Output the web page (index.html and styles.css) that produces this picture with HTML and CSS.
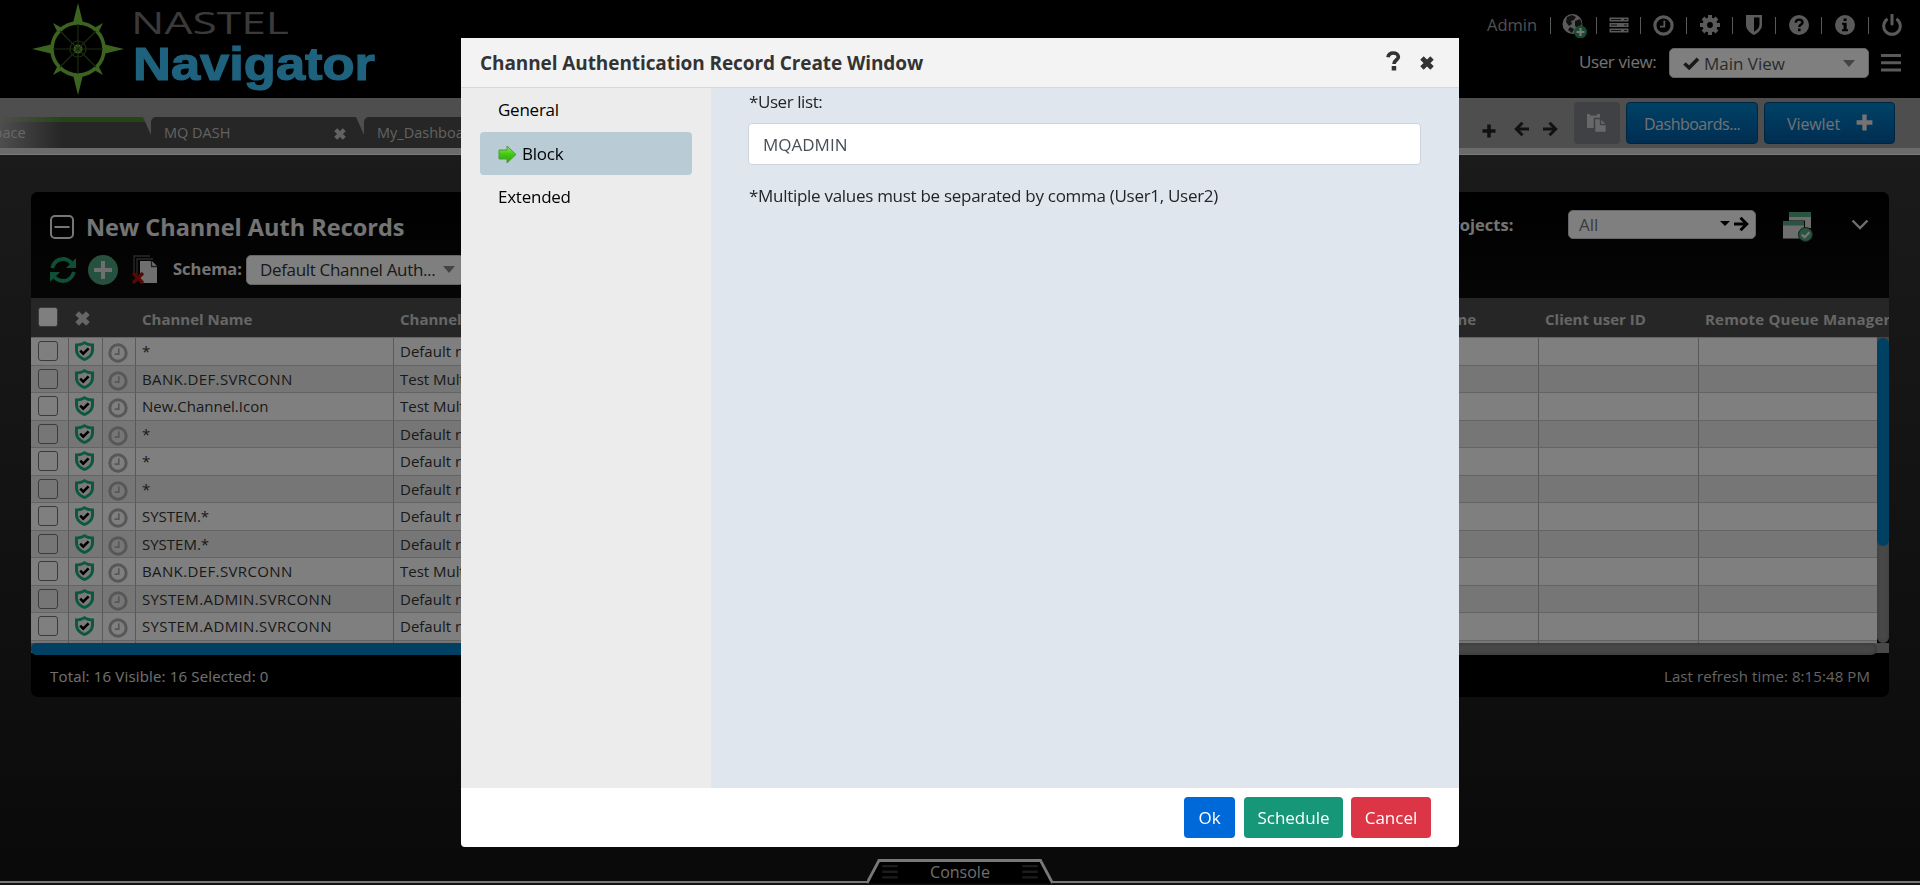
FILE: index.html
```html
<!DOCTYPE html>
<html lang="en">
<head>
<meta charset="utf-8">
<title>Nastel Navigator</title>
<link rel="stylesheet" href="styles.css">
</head>
<body>
<svg class="defs" width="0" height="0" aria-hidden="true">
  <symbol id="shield" viewBox="0 0 19 20"><path d="M9.500 0C7 2 3.500 2.600 0 2.600V9c0 5 4 9 9.500 11C15 18 19 14 19 9V2.600C15.500 2.600 12 2 9.500 0z" fill="#18b07a"/><path d="M9.500 3.200C7.500 4.400 5.300 5 3 5.200V9c0 3.600 2.600 6.400 6.500 8 3.900-1.600 6.500-4.400 6.500-8V5.200C13.700 5 11.500 4.400 9.500 3.200z" fill="#f4f4f4"/><path d="M5.200 9.700l3 3 5.400-5.400" fill="none" stroke="#000" stroke-width="2.600"/></symbol>
  <symbol id="clock" viewBox="0 0 20 20"><circle cx="10" cy="10" r="8.200" fill="none" stroke="currentColor" stroke-width="3"/><path d="M10.800 5.200v5.900H6.600" fill="none" stroke="currentColor" stroke-width="1.700"/></symbol>
  <symbol id="times" viewBox="0.600 0.600 12.800 12.800"><path d="M2.400 2.400l9.200 9.200M11.600 2.400l-9.200 9.200" stroke="currentColor" stroke-width="4.400"/></symbol>
  <symbol id="plus" viewBox="0 0 14 14"><path d="M7 0.500v13M0.500 7h13" stroke="currentColor" stroke-width="3.600"/></symbol>
  <symbol id="arrow" viewBox="0 0 16 16"><path d="M1 8h12M7.500 1.800L13.700 8l-6.200 6.200" fill="none" stroke="currentColor" stroke-width="3"/></symbol>
  <symbol id="bars" viewBox="0 0 20 18"><path d="M0 1.500h20M0 8.700h20M0 16h20" stroke="currentColor" stroke-width="3"/></symbol>
</svg>

<header class="top">
  <svg class="logo" viewBox="0 0 390 98" width="390" height="98">
    <g fill="#78c840" stroke="none">
      <path d="M78 3l5 20h-10zM78 95l5-20h-10zM32 49l21-5v10zM124 49l-21-5v10z"/>
      <path d="M53 23l9 5-4 5zM103 23l-9 5 4 5zM53 75l9-5-4-5zM103 75l-9-5 4-5z"/>
      <circle cx="78" cy="49" r="4.500"/>
    </g>
    <circle cx="78" cy="49" r="26" fill="none" stroke="#78c840" stroke-width="3.600"/>
    <g fill="none" stroke="#35591f" stroke-width="1.200"><circle cx="78" cy="49" r="8"/><path d="M78 24v50M53 49h50M60 31l36 36M96 31L60 67"/></g>
    <text x="131" y="33.500" class="brand-a" textLength="158" lengthAdjust="spacingAndGlyphs">NASTEL</text>
    <text x="133" y="80" class="brand-b" textLength="242" lengthAdjust="spacingAndGlyphs">Navigator</text>
  </svg>
  <div class="tools">
    <div class="toolrow">
      <span class="admin">Admin</span>
      <i><svg width="26" height="26" viewBox="0 0 26 26"><circle cx="11.500" cy="12" r="10" fill="#b6b6b6"/><path d="M6 5l5-2 4 2-2 3-3 1 1 3-3 2-3-4zM14 9l5-2 2 5-4 4-3-2zM9 15l4 2-2 4-4-3z" fill="#222"/><circle cx="19.500" cy="20" r="6.500" fill="#2f9560"/><path d="M19.500 16v8M15.500 20h8" stroke="#eee" stroke-width="2.200"/></svg></i>
      <i><svg width="20" height="16" viewBox="0 0 20 16"><path d="M.5 2.500h19M.5 8h19M.5 13.500h19" stroke="#b4b4b4" stroke-width="4"/><path d="M2 2.500h10M2 8h6M2 13.500h10M15 2.500h3M15 8h3M15 13.500h3" stroke="#222" stroke-width="1"/></svg></i>
      <i><svg width="21" height="21"><use href="#clock"/></svg></i>
      <i><svg width="20" height="20" viewBox="-10 -10 20 20"><circle r="5.200" fill="none" stroke="currentColor" stroke-width="4.600"/><path d="M0-10v4M0 6v4M-10 0h4M6 0h4M-7-7l3 3M7 7L4 4M7-7L4-4M-7 7l3-3" stroke="currentColor" stroke-width="4"/></svg></i>
      <i><svg width="18" height="20" viewBox="0 0 18 20"><path d="M1 0h16v10c0 4.500-4 8-8 10-4-2-8-5.500-8-10zM9 2.500v14.300c3.500-2 5.500-4.300 5.500-7.300v-7z" fill="currentColor" fill-rule="evenodd"/></svg></i>
      <i><svg width="20" height="20" viewBox="0 0 20 20"><circle cx="10" cy="10" r="10" fill="currentColor"/><path d="M6.600 7.600c.4-2.200 1.800-3 3.400-3 2 0 3.500 1.100 3.500 2.800 0 2.300-3.200 2-3.200 4.600" fill="none" stroke="#000" stroke-width="2.400"/><path d="M9 13.600h2.600v2.600H9z"/></svg></i>
      <i><svg width="20" height="20" viewBox="0 0 20 20"><circle cx="10" cy="10" r="10" fill="currentColor"/><path d="M8.600 3.500h3v2.600h-3zM7 7.800h4.600v6.400H13v2H7v-2h1.500V9.800H7z"/></svg></i>
      <i><svg width="20" height="22" viewBox="0 0 20 22"><path d="M5.600 5a8.300 8.300 0 1 0 8.800 0" fill="none" stroke="currentColor" stroke-width="3"/><path d="M10 1v9" stroke="currentColor" stroke-width="3" stroke-linecap="round"/></svg></i>
    </div>
    <div class="viewrow">
      <span class="uv">User view:</span>
      <div class="select mainview"><svg width="17" height="13" viewBox="0 0 17 13"><path d="M1.500 6.500l4.700 4.300L15 1.800" fill="none" stroke="#333" stroke-width="3.600"/></svg><span>Main View</span><b class="caret"></b></div>
      <svg class="burger" width="20" height="18"><use href="#bars"/></svg>
    </div>
  </div>
</header>

<nav class="tabbar">
  <div class="tabs">
    <div class="tab active"><span>Workspace</span></div>
    <div class="tab"><span>MQ DASH</span><svg width="12" height="12"><use href="#times"/></svg></div>
    <div class="tab"><span>My_Dashboard</span></div>
  </div>
  <div class="actions">
    <svg class="a1" width="14" height="14"><use href="#plus"/></svg>
    <svg class="a2" width="16" height="16"><use href="#arrow"/></svg>
    <svg class="a3" width="16" height="16"><use href="#arrow"/></svg>
    <div class="paste"><svg width="20" height="20" viewBox="0 0 20 20"><path d="M0 1h13v14H0z" fill="#d0d0d2"/><path d="M3 1.800h7" stroke="#80828a" stroke-width="1.500"/><path d="M7.500 5.500h6.500l5.500 5.500v8.500h-12z" fill="#d0d0d2" stroke="#80828a" stroke-width="1.600"/><path d="M13.500 6v5.500H19" fill="none" stroke="#80828a" stroke-width="1.300"/></svg></div>
    <div class="bluebtn dash"><span>Dashboards...</span></div>
    <div class="bluebtn view"><span>Viewlet</span><svg width="17" height="17"><use href="#plus"/></svg></div>
  </div>
</nav>

<main class="stage">
  <section class="panel">
    <div class="phead">
      <div class="ptitle">
        <svg width="24" height="24" viewBox="0 0 24 24" fill="none" stroke="#ececec"><rect x="1" y="1" width="22" height="22" rx="4" stroke-width="2"/><path d="M4.500 12h15" stroke-width="2"/></svg>
        <h1>New Channel Auth Records</h1>
      </div>
      <div class="pfilter">
        <b class="proj">Projects:</b>
        <div class="select all"><span>All</span><b class="caret dark"></b><svg width="16" height="16"><use href="#arrow"/></svg></div>
        <svg class="wins" width="30" height="30" viewBox="0 0 30 30"><path d="M6 0h22v16H6z" fill="#ddd"/><path d="M6 0h22v5H6z" fill="#50a880"/><path d="M-1 8.500h23V27H-1z" fill="#111"/><path d="M0 9h21v17.500H0z" fill="#ddd"/><path d="M0 9h21v4.500H0z" fill="#50a880"/><circle cx="22.500" cy="22.500" r="7" fill="#50a880" stroke="#1c4030"/><path d="M18.800 22.500l2.800 2.800 4.800-5" fill="none" stroke="#eee" stroke-width="2"/></svg>
        <svg class="chev" width="18" height="11" viewBox="0 0 18 11"><path d="M1.500 1.500L9 9l7.500-7.500" fill="none" stroke="#ddd" stroke-width="2.400"/></svg>
      </div>
      <div class="ptools">
        <svg width="26" height="26" viewBox="0 0 26 26" fill="none" stroke="#1c9f6c" stroke-width="3.800"><path d="M2 11C4 5 8 2 13 2c4 0 7 2 9.500 5"/><path d="M24 15c-2 6-6 9-11 9-4 0-7-2-9.500-5"/><path d="M26 1v10H16zM0 25V15h10z" fill="#1c9f6c" stroke="none"/></svg>
        <svg width="30" height="30" viewBox="0 0 30 30"><circle cx="15" cy="15" r="15" fill="#4fa27f"/><path d="M15 6v18M6 15h18" stroke="#dedede" stroke-width="4"/></svg>
        <svg width="26" height="30" viewBox="0 0 26 30"><path d="M2 20V1h16M5 20V4h16" fill="none" stroke="#555" stroke-width="1.300"/><path d="M8 6h12l5 5v17H8z" fill="#dedede"/><path d="M19.500 6v5.500H25" fill="none" stroke="#444" stroke-width="1.300"/><path d="M1 18l10 10M11 18L1 28" stroke="#ad1408" stroke-width="3.400"/></svg>
        <b class="schema">Schema:</b>
        <div class="select sch"><span>Default Channel Auth...</span><b class="caret"></b></div>
      </div>
    </div>
    <div class="row thead">
      <div><span class="box full"></span></div><div class="tx"><svg width="15" height="15"><use href="#times"/></svg></div><div></div><div>Channel Name</div><div>Channel Auth</div><div class="un">User name</div><div>Client user ID</div><div class="rq">Remote Queue Manager</div>
    </div>
    <div class="tbody">
      <div class="rows">
        <div class="row"><div><span class="box"></span></div><div><svg class="sh"><use href="#shield"/></svg></div><div><svg class="ck"><use href="#clock"/></svg></div><div>*</div><div>Default rule</div><div></div><div></div><div></div></div>
        <div class="row"><div><span class="box"></span></div><div><svg class="sh"><use href="#shield"/></svg></div><div><svg class="ck"><use href="#clock"/></svg></div><div class="caps">BANK.DEF.SVRCONN</div><div>Test Multi</div><div></div><div></div><div></div></div>
        <div class="row"><div><span class="box"></span></div><div><svg class="sh"><use href="#shield"/></svg></div><div><svg class="ck"><use href="#clock"/></svg></div><div>New.Channel.Icon</div><div>Test Multi</div><div></div><div></div><div></div></div>
        <div class="row"><div><span class="box"></span></div><div><svg class="sh"><use href="#shield"/></svg></div><div><svg class="ck"><use href="#clock"/></svg></div><div>*</div><div>Default rule</div><div></div><div></div><div></div></div>
        <div class="row"><div><span class="box"></span></div><div><svg class="sh"><use href="#shield"/></svg></div><div><svg class="ck"><use href="#clock"/></svg></div><div>*</div><div>Default rule</div><div></div><div></div><div></div></div>
        <div class="row"><div><span class="box"></span></div><div><svg class="sh"><use href="#shield"/></svg></div><div><svg class="ck"><use href="#clock"/></svg></div><div>*</div><div>Default rule</div><div></div><div></div><div></div></div>
        <div class="row"><div><span class="box"></span></div><div><svg class="sh"><use href="#shield"/></svg></div><div><svg class="ck"><use href="#clock"/></svg></div><div>SYSTEM.*</div><div>Default rule</div><div></div><div></div><div></div></div>
        <div class="row"><div><span class="box"></span></div><div><svg class="sh"><use href="#shield"/></svg></div><div><svg class="ck"><use href="#clock"/></svg></div><div>SYSTEM.*</div><div>Default rule</div><div></div><div></div><div></div></div>
        <div class="row"><div><span class="box"></span></div><div><svg class="sh"><use href="#shield"/></svg></div><div><svg class="ck"><use href="#clock"/></svg></div><div class="caps">BANK.DEF.SVRCONN</div><div>Test Multi</div><div></div><div></div><div></div></div>
        <div class="row"><div><span class="box"></span></div><div><svg class="sh"><use href="#shield"/></svg></div><div><svg class="ck"><use href="#clock"/></svg></div><div class="caps">SYSTEM.ADMIN.SVRCONN</div><div>Default rule</div><div></div><div></div><div></div></div>
        <div class="row"><div><span class="box"></span></div><div><svg class="sh"><use href="#shield"/></svg></div><div><svg class="ck"><use href="#clock"/></svg></div><div class="caps">SYSTEM.ADMIN.SVRCONN</div><div>Default rule</div><div></div><div></div><div></div></div>
        <div class="row"><div></div><div></div><div></div><div></div><div></div><div></div><div></div><div></div></div>
      </div>
      <div class="vbar"><div></div></div>
    </div>
    <div class="hwrap"><div class="hbar"><div></div></div></div>
    <div class="pfoot"><span class="tot">Total: 16 Visible: 16 Selected: 0</span><span class="ref">Last refresh time: 8:15:48 PM</span></div>
  </section>
</main>

<footer class="console">
  <svg width="186" height="28" viewBox="0 0 186 28"><path d="M0 25.500h1L12 2.500h163l11 23" fill="#000"/><path d="M0 25L12 2.500h161.500L185.500 25" fill="none" stroke="#f0f0f0" stroke-width="2.800"/></svg>
  <div class="clabel"><svg width="16" height="14"><use href="#bars"/></svg><span>Console</span><svg width="16" height="14"><use href="#bars"/></svg></div>
</footer>

<div class="shade">
  <div class="modal">
    <div class="mhead"><h2>Channel Authentication Record Create Window</h2>
      <svg class="q" width="15" height="20" viewBox="0 0 15 20"><path d="M2 6.200C2.500 3.200 4.500 2 7.300 2c3 0 5 1.600 5 3.900 0 3.200-4.300 3-4.300 7.100" fill="none" stroke="#333" stroke-width="3.700"/><path d="M5.700 15h4.500v4.400H5.700z" fill="#333"/></svg>
      <svg class="x" width="14" height="14"><use href="#times"/></svg></div>
    <div class="mbody">
      <div class="side">
        <div class="item"><span>General</span></div>
        <div class="item on"><svg width="19" height="19" viewBox="0 0 19 19"><defs><linearGradient id="g" x1="0" y1="0" x2="0" y2="1"><stop offset="0" stop-color="#9be05a"/><stop offset=".5" stop-color="#3cc912"/><stop offset="1" stop-color="#35a010"/></linearGradient></defs><path d="M1 5h8V1l9 8.500-9 8.500v-4H1z" fill="url(#g)" stroke="#4f9a3a"/></svg><span>Block</span></div>
        <div class="item"><span>Extended</span></div>
      </div>
      <div class="form">
        <label class="ul">*User list:</label>
        <div class="input"><span>MQADMIN</span></div>
        <p class="mult">*Multiple values must be separated by comma (User1, User2)</p>
      </div>
    </div>
    <div class="mfoot"><div class="btn ok">Ok</div><div class="btn sd">Schedule</div><div class="btn cn">Cancel</div></div>
  </div>
</div>
</body>
</html>
```
FILE: styles.css
```css
* { box-sizing: border-box; }
body { margin: 0; width: 1920px; height: 885px; overflow: hidden; display: flex; flex-direction: column; font-family: "Open Sans", "Noto Sans", sans-serif; font-size: 15px; background: #1a1a1a; white-space: nowrap; }
svg { display: block; flex: none; }
.defs { position: absolute; }
h1, h2, p { margin: 0; }
.caret { width: 0; height: 0; border: 6px solid transparent; border-top: 7px solid #888; border-bottom: 0; }
.caret.dark { border-width: 5px; border-top: 5px solid #000; border-bottom: 0; }
.select { display: flex; align-items: center; height: 30px; background: #fff; border: 1px solid #ccc; border-radius: 5px; color: #555; font-size: 17px; }

/* header */
.top { height: 98px; background: #000; display: flex; justify-content: space-between; flex: none; }
.brand-a { font: 31px "Open Sans"; fill: #757575; }
.brand-b { font: bold 47px "Liberation Sans"; fill: #3cc4fc; stroke: #3cc4fc; stroke-width: 1.2px; }
.tools { width: 433px; color: #b4b4b4; }
.toolrow { display: grid; grid-template-columns: 63px 46px 44px 46px 46px 43px 46px 47px 48px; height: 48px; padding-top: 2px; align-items: center; }
.admin { color: #a0a0a0; font-size: 16.500px; line-height: 46px; }
.toolrow i { display: flex; align-items: center; justify-content: center; height: 17px; border-left: 1px solid #b0b0b0; }
.toolrow i:last-child { padding-right: 2px; }
.viewrow { display: flex; align-items: center; height: 30px; }
.uv { width: 90px; margin: -3px 0 0 92px; color: #e4e4e4; font-size: 17px; letter-spacing: -.4px; }
.mainview { width: 200px; padding: 0 13px 0 13px; }
.mainview span { margin-left: 4px; }
.mainview .caret { margin-left: auto; }
.burger { margin-left: 12px; }

/* tab bar */
.tabbar { height: 57px; flex: none; background: linear-gradient(#9c9c9c 50px, #d6d6d6 50px, #d6d6d6 56px, #f4f4f4 56px); display: flex; justify-content: space-between; }
.tabs { display: flex; margin: 19px 0 7px -62px; width: 700px; }
.tab { width: 213px; height: 31px; display: flex; align-items: center; background: #4c4c4c; border-radius: 5px 0 0 0; clip-path: polygon(0 0, 205px 0, 213px 18px, 213px 100%, 0 100%); padding: 0 18px 1px 13px; color: #c4c4c4; font-size: 14.500px; justify-content: space-between; }
.tab svg { margin-top: 4px; }
.tab.active { background: linear-gradient(90deg, #9c9c9c 62px, rgba(156,156,156,0) 124px), linear-gradient(#4c8a2c 5px, #4c4c4c 5px); color: #d0d0d0; }
.actions { display: flex; width: 438px; padding-top: 4px; color: #222; }
.a1 { margin-top: 22px; } .a2 { margin: 19px 0 0 18px; transform: scaleX(-1); } .a3 { margin: 19px 0 0 12px; }
.paste { width: 46px; height: 42px; margin-left: 16px; border-radius: 4px; background: #80828a; display: flex; align-items: center; justify-content: center; }
.bluebtn { height: 42px; margin-left: 6px; border: 1px solid #004a80; border-radius: 4px; background: linear-gradient(#0084cc, #005ca4); color: #e0e4e8; font-size: 16px; display: flex; align-items: center; padding-top: 2px; }
.dash { width: 132px; padding-left: 17px; letter-spacing: -.5px; } .view { width: 131px; padding-left: 22px; letter-spacing: -.1px; } .view svg { margin: -4px 0 0 16px; color: #e8e8e8; }

/* viewlet */
.stage { flex: 1; background: linear-gradient(#363636, #141414); padding: 37px 31px 0; }
.panel { height: 505px; background: #000; border-radius: 7px; overflow: hidden; display: flex; flex-direction: column; }
.phead { height: 106px; background: linear-gradient(#000, #0c0c0c); display: grid; grid-template: 56px 50px / 1fr auto; padding-left: 19px; color: #e8e8e8; }
.ptitle { display: flex; align-items: center; padding-top: 14px; }
h1 { font-size: 23.500px; font-weight: 700; margin-left: 12px; }
.pfilter { display: flex; padding-right: 20px; }
.proj { font-size: 16.500px; line-height: 20px; padding-top: 23px; width: 126px; }
.all { width: 188px; height: 29px; margin-top: 18px; padding: 0 6px 0 10px; color: #777; }
.all .caret { margin: -2px 3px 0 auto; } .all svg { color: #000; margin-top: -2px; }
.wins { margin: 20px 0 0 27px; } .chev { margin: 27px 0 0 38px; }
.ptools { display: flex; align-items: center; padding-bottom: 7px; }
.ptools svg:nth-child(2) { margin-left: 12px; } .ptools svg:nth-child(3) { margin-left: 14px; }
.schema { font-size: 16.500px; margin: -3px 0 0 15px; width: 73px; }
.sch { width: 218px; padding: 0 8px 0 13px; color: #333; letter-spacing: -.33px; } .sch .caret { margin-left: auto; }
.row { display: grid; grid-template-columns: 38px 34px 33px 258px 984px 161px 160px 178px; height: 27.500px; background: #fff; }
.row > div { border-right: 1px solid #b2b2b2; border-bottom: 1px solid #c8c8c8; padding-left: 6px; line-height: 27px; overflow: hidden; color: #333; }
.row > .caps { letter-spacing: .38px; }
.row > div:first-child { padding-left: 7px; }
.row > div:last-child { border-right: 0; }
.rows .row:nth-child(even) { background: #ededed; }
.box { display: block; width: 20px; height: 20px; margin-top: 3px; border: 1px solid #767676; border-radius: 3px; }
.sh { width: 19px; height: 20px; margin: 3px 0 0; }
.ck { width: 20px; height: 20px; margin: 5px 0 0 -1px; color: #afafaf; }
.thead { height: 39px; background: linear-gradient(#4c4c4c 39px, #c0c0c0 39px); flex: none; grid-template-columns: 38px 34px 33px 258px 984px 161px 160px 190px; }
.thead > div { border: 0; color: #ccc; font-weight: 700; line-height: 43px; overflow: visible; }
.thead .un { text-align: right; padding-right: 63px; }
.thead > .rq { letter-spacing: .2px; }
.box.full { background: #fff; margin-top: 9px; }
.thead .tx svg { margin: 13px 0 0; }
.tbody { height: 306px; display: flex; flex: none; }
.rows { width: 1846px; overflow: hidden; border-top: 1px solid #c8c8c8; }
.vbar { width: 12px; background: #929292; border-radius: 0 0 6px 6px; box-shadow: inset 0 0 5px #777; }
.vbar div { height: 208px; margin-top: 1px; background: #0080c6; border-radius: 6px; }
.hwrap { height: 10px; background: #929292; flex: none; }
.hbar { position: relative; width: 1846px; height: 12px; background: #909090; border-radius: 6px; box-shadow: inset 0 0 5px #666; }
.hbar div { width: 900px; height: 12px; background: #0080c6; border-radius: 6px; }
.pfoot { display: flex; justify-content: space-between; padding: 11px 19px 0; line-height: 24px; color: #e0e0e0; font-size: 15px; } .tot { letter-spacing: .17px; } .ref { color: #c8c8c8; letter-spacing: .09px; }

/* console */
.console { height: 27px; margin-top: -27px; display: grid; justify-content: center; background: linear-gradient(transparent 23px, #f0f0f0 23px, #f0f0f0 25px, #222 25px); }
.console > * { grid-area: 1 / 1; }
.clabel { display: flex; align-items: center; justify-content: space-between; padding: 0 15px 0; color: #ddd; font-size: 16px; line-height: 20px; }
.clabel svg { color: #383838; }

/* dialog */
.shade { position: fixed; inset: 0; background: rgba(0,0,0,.5); padding: 38px 461px; }
.modal { width: 998px; height: 809px; display: flex; flex-direction: column; background: #fff; border-radius: 0 0 4px 4px; overflow: hidden; color: #212529; font-size: 17px; }
.mhead { height: 50px; background: #f3f3f3; border-bottom: 1px solid #d5d9df; display: flex; padding: 0 25px 0 19px; color: #333; }
h2 { font-size: 19px; font-weight: 700; line-height: 50px; margin-right: auto; letter-spacing: -.09px; }
.q { margin-top: 13px; } .x { margin: 18px 0 0 19px; }
.mbody { flex: 1; display: flex; }
.side { width: 250px; background: #ececec; padding: 0 19px; color: #000; letter-spacing: -.25px; }
.item { height: 43px; margin-bottom: .5px; border-radius: 4px; padding-left: 18px; display: flex; align-items: center; }
.item.on { background: #b9ccd5; } .item svg { margin: 3px 5px 0 0; }
.form { flex: 1; background: #dfe6ee; padding: 0 38px 0 37px; }
.ul { display: block; height: 35px; line-height: 28px; padding-left: 1px; letter-spacing: -.42px; }
.input { height: 42px; border: 1px solid #ced4da; border-radius: 4px; background: #fff; line-height: 41px; padding-left: 14px; color: #495057; }
.mult { line-height: 24px; padding: 19px 0 0 1px; letter-spacing: -.29px; }
.mfoot { height: 59px; display: flex; justify-content: flex-end; padding: 9px 28px 0 0; color: #fff; }
.btn { height: 41px; border-radius: 4px; line-height: 41px; text-align: center; }
.ok { width: 51px; background: #0069d9; } .sd { width: 99px; margin: 0 8px 0 9px; background: #169777; } .cn { width: 80px; background: #dc3545; }
```
